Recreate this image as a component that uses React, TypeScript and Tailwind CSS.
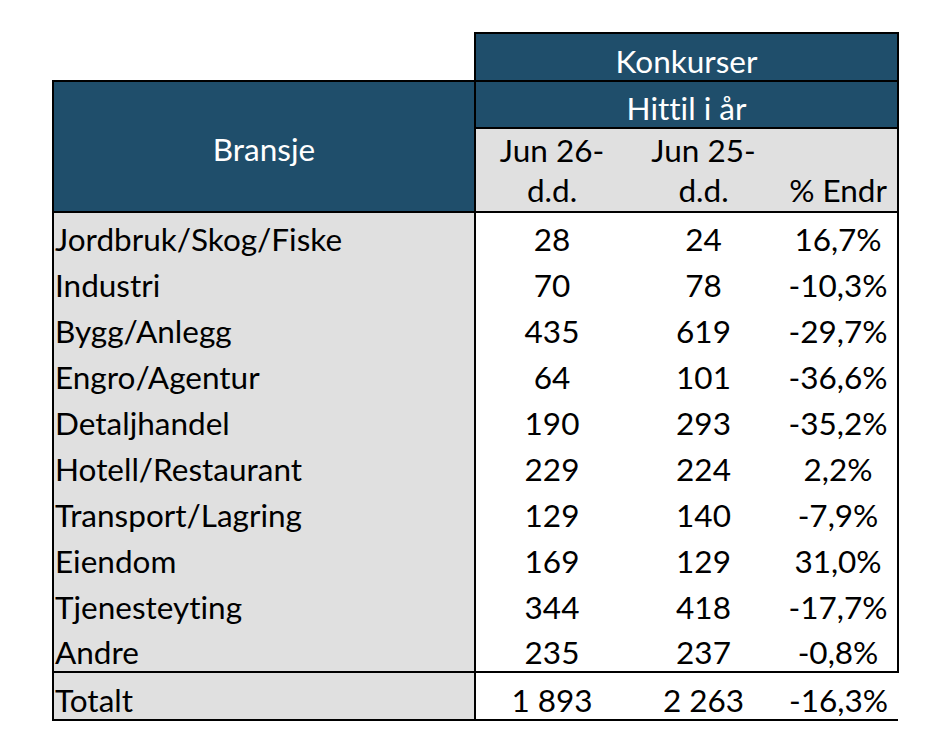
const rows: [string, string, string, string][] = [
  ["Jordbruk/Skog/Fiske", "28", "24", "16,7%"],
  ["Industri", "70", "78", "-10,3%"],
  ["Bygg/Anlegg", "435", "619", "-29,7%"],
  ["Engro/Agentur", "64", "101", "-36,6%"],
  ["Detaljhandel", "190", "293", "-35,2%"],
  ["Hotell/Restaurant", "229", "224", "2,2%"],
  ["Transport/Lagring", "129", "140", "-7,9%"],
  ["Eiendom", "169", "129", "31,0%"],
  ["Tjenesteyting", "344", "418", "-17,7%"],
  ["Andre", "235", "237", "-0,8%"],
]

export default function App() {
  return (
    <div className="min-h-[753px] w-[951px] bg-white pl-[52px] pt-[32px] font-['Lato',sans-serif] text-[31.5px] leading-8 text-black [font-variant-ligatures:none]">
      <table className="table-fixed border-collapse">
        <colgroup>
          <col className="w-[422px]" />
          <col className="w-[153px]" />
          <col className="w-[151px]" />
          <col className="w-[119px]" />
        </colgroup>
        <tbody>
          {/* Top header */}
          <tr>
            <td className="h-[48px] p-0" />
            <td
              colSpan={3}
              className="h-[48px] border-2 border-black bg-[#1f4e6b] p-0 pb-[3px] text-center align-bottom text-white"
            >
              Konkurser
            </td>
          </tr>
          <tr>
            <td
              rowSpan={2}
              className="border-2 border-black bg-[#1f4e6b] p-0 pt-[4px] text-center align-middle text-white"
            >
              Bransje
            </td>
            <td
              colSpan={3}
              className="h-[47px] border-2 border-black bg-[#1f4e6b] p-0 pb-[3px] text-center align-bottom text-white"
            >
              Hittil i år
            </td>
          </tr>
          <tr className="bg-[#e0e0e0] leading-[40px]">
            <td className="h-[84px] border-b-2 border-black p-0 pb-px text-center align-bottom">
              Jun 26-
              <br />
              d.d.
            </td>
            <td className="h-[84px] border-b-2 border-black p-0 pb-px text-center align-bottom">
              Jun 25-
              <br />
              d.d.
            </td>
            <td className="h-[84px] border-b-2 border-r-2 border-black p-0 pb-px text-center align-bottom">
              % Endr
            </td>
          </tr>

          {/* Data rows */}
          {rows.map((r, i) => {
            const last = i === rows.length - 1
            return (
              <tr key={r[0]} className={last ? "border-b-2 border-black" : ""}>
                <td className="h-[46px] border-x-2 border-black bg-[#e0e0e0] p-0 pb-[3px] pl-px align-bottom">
                  {r[0]}
                </td>
                <td className="h-[46px] p-0 pb-[3px] text-center align-bottom">{r[1]}</td>
                <td className="h-[46px] p-0 pb-[3px] text-center align-bottom">{r[2]}</td>
                <td className="h-[46px] border-r-2 border-black p-0 pb-[3px] text-center align-bottom">
                  {r[3]}
                </td>
              </tr>
            )
          })}

          {/* Total */}
          <tr className="border-b-2 border-black">
            <td className="h-[48px] border-x-2 border-black bg-[#e0e0e0] p-0 pb-[3px] pl-px align-bottom">
              Totalt
            </td>
            <td className="h-[48px] p-0 pb-[3px] text-center align-bottom">1&nbsp;893</td>
            <td className="h-[48px] p-0 pb-[3px] text-center align-bottom">2&nbsp;263</td>
            <td className="h-[48px] p-0 pb-[3px] text-center align-bottom">-16,3%</td>
          </tr>
        </tbody>
      </table>
    </div>
  )
}
